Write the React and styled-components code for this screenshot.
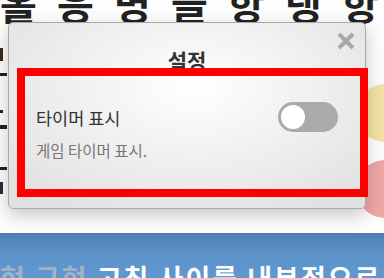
import React from "react";
import styled, { createGlobalStyle } from "styled-components";

const Global = createGlobalStyle`
  html, body { margin: 0; padding: 0; background: #fff; }
  body { font-family: "Noto Sans CJK KR", "Noto Sans", sans-serif; overflow: hidden; }
`;

const Page = styled.div`
  position: relative;
  width: 384px;
  height: 278px;
  overflow: hidden;
  display: flex;
  flex-direction: column;
  background: #fdfdfd;
`;

const BigLine = styled.div`
  display: flex;
  gap: ${(p) => p.$gap}px;
  padding-left: ${(p) => p.$pl}px;
  margin-top: ${(p) => p.$mt}px;
  height: ${(p) => p.$h}px;
  font-size: 40px;
  line-height: 40px;
  font-weight: 700;
  color: #222;
  white-space: nowrap;
`;

const Glyph = styled.span`
  width: 36px;
  text-align: center;
`;

const Middle = styled.div`
  flex: 1;
  display: flex;
  justify-content: space-between;
  align-items: flex-start;
`;

const SideCol = styled.div`
  display: flex;
  flex-direction: column;
  align-items: ${(p) => p.$align};
  gap: ${(p) => p.$gap}px;
  padding-top: ${(p) => p.$pt}px;
`;

const Mark = styled.div`
  width: ${(p) => p.$w}px;
  height: ${(p) => p.$h}px;
  margin-top: ${(p) => p.$mt || 0}px;
  background: ${(p) => p.$c || "#222"};
`;

const Circle = styled.div`
  width: 58px;
  height: 58px;
  border-radius: 50%;
  background: ${(p) => p.$c};
  margin-right: -30px;
`;

const Band = styled.div`
  height: 45px;
  background: linear-gradient(#4c7db0 0%, #5c93c9 45%, #5f99cf 100%);
  padding: 30px 0 0 0;
  box-sizing: border-box;
  font-size: 27px;
  line-height: 30px;
  font-weight: 700;
  white-space: nowrap;
  color: #fff;
  letter-spacing: 2px;
`;

const Dim = styled.span`
  color: #9fb3c8;
`;

const Overlay = styled.div`
  position: absolute;
  left: 8px;
  top: 22px;
  width: 358px;
  height: 187px;
  box-sizing: border-box;
  border: 1px solid #a9a9a9;
  border-radius: 5px;
  background: radial-gradient(ellipse 70% 80% at 52% 35%, #ffffff 0%, #f1f1f1 45%, #e0e0e0 100%);
  box-shadow: 0 6px 18px rgba(0, 0, 0, 0.22);
  display: flex;
  flex-direction: column;
`;

const Close = styled.button`
  position: absolute;
  right: 10px;
  top: 9px;
  padding: 0;
  border: none;
  background: none;
  width: 18px;
  height: 18px;
  display: flex;
`;

const Title = styled.h2`
  margin: 22px 0 0 0;
  height: 31px;
  text-align: center;
  font-size: 21px;
  line-height: 31px;
  font-weight: 700;
  color: #333;
`;

const Setting = styled.div`
  margin-left: 16px;
  width: 335px;
  height: 113px;
  box-sizing: border-box;
  outline: 8px solid #ff0000;
  padding: 26px 22px 0 11px;
  display: flex;
  flex-direction: column;
  position: relative;
  z-index: 1;
`;

const SettingHead = styled.div`
  display: flex;
  justify-content: space-between;
  align-items: center;
  height: 30px;
`;

const Label = styled.span`
  font-size: 17.5px;
  color: #333;
`;

const Desc = styled.div`
  margin-top: 8px;
  font-size: 15.5px;
  line-height: 20px;
  color: #777;
`;

const Toggle = styled.div`
  width: 60px;
  height: 30px;
  border-radius: 15px;
  background: #aaaaaa;
  box-sizing: border-box;
  padding: 3px;
  display: flex;
  justify-content: ${(p) => (p.$on ? "flex-end" : "flex-start")};
`;

const Knob = styled.div`
  width: 24px;
  height: 24px;
  border-radius: 50%;
  background: #fff;
`;

export default function App() {
  const top = ["홀", "응", "명", "늘", "항", "랭", "항"];
  return (
    <>
      <Global />
      <Page>
        <BigLine $gap={21} $pl={-4} $mt={-17} $h={23}>
          {top.map((g, i) => (
            <Glyph key={i}>{g}</Glyph>
          ))}
        </BigLine>
        <Middle>
          <SideCol $align="flex-start" $gap={12} $pt={42}>
            <Mark $w={3} $h={13} $c="#3a2a1a" />
            <Mark $w={7} $h={3} />
            <Mark $w={3} $h={3} $mt={22} />
            <Mark $w={7} $h={4} />
            <Mark $w={7} $h={3} $mt={26} />
            <Mark $w={3} $h={12} $c="#2a2a40" />
          </SideCol>
          <SideCol $align="flex-end" $gap={18} $pt={78}>
            <Circle $c="#f0e3a3" />
            <Circle $c="#eea7a5" />
          </SideCol>
        </Middle>
        <Band>
          <Dim>현 구현 </Dim>고칭 사이를 내부적으로
        </Band>
        <Overlay>
          <Close aria-label="close">
            <svg width="18" height="18" viewBox="0 0 18 18">
              <path d="M2 2 L16 16 M16 2 L2 16" stroke="#a8a8a8" strokeWidth="4" />
            </svg>
          </Close>
          <Title>설정</Title>
          <Setting>
            <SettingHead>
              <Label>타이머 표시</Label>
              <Toggle>
                <Knob />
              </Toggle>
            </SettingHead>
            <Desc>게임 타이머 표시.</Desc>
          </Setting>
        </Overlay>
      </Page>
    </>
  );
}
